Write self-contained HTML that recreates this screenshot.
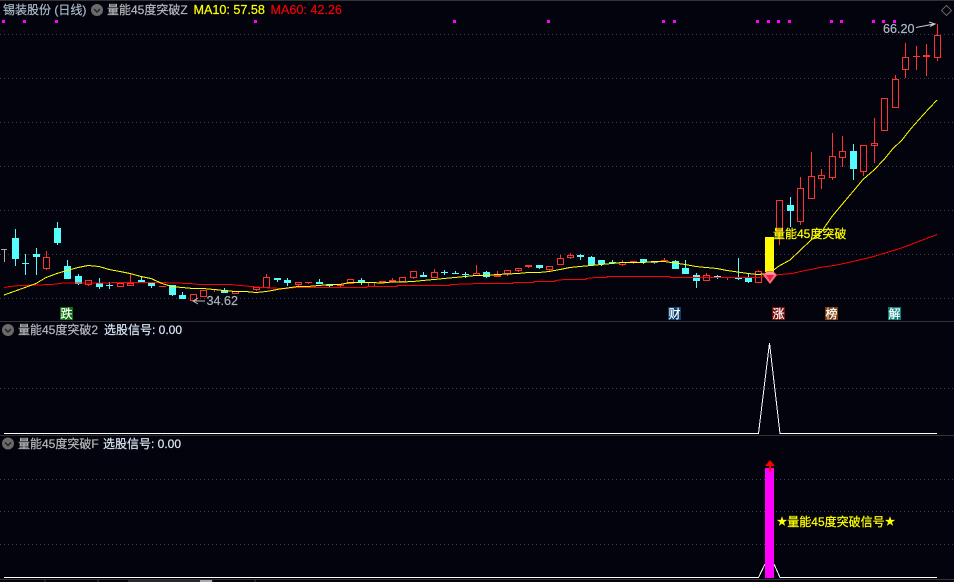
<!DOCTYPE html>
<html><head><meta charset="utf-8"><style>
html,body{margin:0;padding:0;background:#03030d}
svg{display:block}
text{font-family:"Liberation Sans","Noto Sans CJK SC",sans-serif;font-size:12px;stroke-width:.22px}
.h{font-size:12.6px}
.y{fill:#ffff00;stroke:#ffff00}.g{fill:#b4b8bc;stroke:#b4b8bc}.b{fill:#a9b9c6;stroke:#a9b9c6}.w{fill:#d8e4f0;stroke:#d8e4f0}.t{fill:#fff;stroke:#fff}
</style></head><body>
<svg width="954" height="582" viewBox="0 0 954 582" xmlns="http://www.w3.org/2000/svg">
<rect width="954" height="582" fill="#03030d"/>
<rect width="954" height="1" fill="#333"/>
<g stroke="#404040" stroke-width="1" stroke-dasharray="1 3" shape-rendering="crispEdges">
<path d="M0 34.5H954M0 78.5H954M0 122.5H954M0 166.5H954M0 210.5H954M0 254.5H954M0 298.5H954M0 388.5H954M0 479.5H954M0 511.5H954M0 544.5H954"/>
</g>
<g stroke="#333" shape-rendering="crispEdges"><path d="M0 321.5H954M0 435.5H954M0 579.5H954"/></g>
<rect x="128" y="580" width="85" height="2" fill="#2a2a2a"/><rect x="200" y="580" width="12" height="2" fill="#aaa"/>
<path d="M45 580v2M98 580v2M255 580v2" stroke="#444"/>
<g fill="#ff00ff">
<rect x="2" y="20" width="3" height="3"/><rect x="23" y="20" width="3" height="3"/><rect x="55" y="20" width="3" height="3"/><rect x="254" y="20" width="3" height="3"/><rect x="453" y="20" width="3" height="3"/><rect x="547" y="20" width="3" height="3"/><rect x="662" y="20" width="3" height="3"/><rect x="673" y="20" width="3" height="3"/><rect x="756" y="20" width="3" height="3"/><rect x="767" y="20" width="3" height="3"/><rect x="777" y="20" width="3" height="3"/><rect x="788" y="20" width="3" height="3"/><rect x="830" y="20" width="3" height="3"/><rect x="840" y="20" width="3" height="3"/><rect x="872" y="20" width="3" height="3"/><rect x="882" y="20" width="3" height="3"/><rect x="893" y="20" width="3" height="3"/>
</g>
<path d="M1 249.5H7M4.5 249V262" stroke="#aaa" fill="none" shape-rendering="crispEdges"/>
<!-- cyan wicks -->
<path shape-rendering="crispEdges" stroke="#54fcfc" fill="none" d="M15.5 229V266M25.5 254V275M36.5 248V275M57.5 222V245M67.5 260V279M78.5 274V285M99.5 278V289M109.5 282V289M141.5 277V283M151.5 283V288M172.5 285V296M182.5 292V299M224.5 288V293M277.5 278V282M287.5 278V286M319.5 279V284M329.5 284V287M361.5 278V285M423.5 272V277M444.5 270V275M455.5 271V274M465.5 272V278M486.5 271V278M539.5 265V269M580.5 254V260M591.5 256V265M601.5 260V266M612.5 260V264M643.5 259V264M675.5 260V269M685.5 260V274M696.5 273V288M717.5 275V279M738.5 258V280M748.5 274V283M790.5 197V227M853.5 144V180"/>
<!-- cyan bodies -->
<g fill="#54fcfc" shape-rendering="crispEdges">
<rect x="12" y="238" width="7" height="21"/><rect x="22" y="263" width="7" height="1"/><rect x="33" y="254" width="7" height="3"/><rect x="54" y="228" width="7" height="15"/><rect x="64" y="266" width="7" height="13"/><rect x="75" y="276" width="7" height="8"/><rect x="96" y="283" width="7" height="4"/><rect x="106" y="285" width="7" height="1"/><rect x="138" y="280" width="7" height="3"/><rect x="148" y="283" width="7" height="3"/><rect x="169" y="285" width="7" height="10"/><rect x="179" y="295" width="7" height="4"/><rect x="221" y="290" width="7" height="3"/>
<rect x="274" y="278" width="7" height="2"/><rect x="284" y="280" width="7" height="3"/><rect x="316" y="282" width="7" height="2"/><rect x="326" y="285" width="7" height="1"/><rect x="358" y="280" width="7" height="3"/><rect x="420" y="275" width="7" height="2"/><rect x="441" y="272" width="7" height="1"/><rect x="452" y="273" width="7" height="1"/><rect x="462" y="274" width="7" height="1"/><rect x="483" y="272" width="7" height="5"/><rect x="536" y="265" width="7" height="3"/><rect x="577" y="255" width="7" height="2"/><rect x="588" y="257" width="7" height="8"/><rect x="598" y="260" width="7" height="4"/><rect x="609" y="262" width="7" height="1"/><rect x="640" y="259" width="7" height="3"/><rect x="672" y="261" width="7" height="8"/><rect x="682" y="268" width="7" height="6"/><rect x="693" y="275" width="7" height="6"/><rect x="714" y="276" width="7" height="1"/><rect x="735" y="278" width="7" height="1"/><rect x="745" y="278" width="7" height="4"/><rect x="787" y="205" width="7" height="6"/><rect x="850" y="151" width="7" height="18"/>
</g>
<path d="M654.5 262V264M651 262.5H658" stroke="#999" fill="none" shape-rendering="crispEdges"/>
<!-- red hollow with wicks -->
<path shape-rendering="crispEdges" stroke="#ff3232" fill="none" d="M43.5 257.5h6v11h-6zM46.5 251V257M46.5 269V270
M85.5 280.5h6v4h-6zM88.5 285V286
M117.5 283.5h6v3h-6z
M127.5 283.5h6v2h-6zM130.5 274V283
M190.5 294.5h6v6h-6z
M200.5 290.5h6v6h-6z
M232.5 291.5h6v2h-6z
M253.5 287.5h6v2h-6zM256.5 290V291
M263.5 277.5h6v10h-6zM266.5 274V277
M295.5 282.5h6v2h-6zM298.5 285V286
M347.5 279.5h6v4h-6z
M368.5 282.5h6v4h-6z
M399.5 277.5h6v4h-6z
M410.5 271.5h6v6h-6zM413.5 278V279
M431.5 272.5h6v5h-6zM434.5 269V272
M473.5 273.5h6v2h-6zM476.5 265V273
M504.5 270.5h6v3h-6zM507.5 274V276
M515.5 268.5h6v2h-6zM518.5 271V272
M546.5 266.5h6v3h-6zM549.5 270V271
M557.5 258.5h6v6h-6zM560.5 255V258
M567.5 255.5h6v2h-6zM570.5 253V255M570.5 258V259
M619.5 262.5h6v2h-6zM622.5 260V262M622.5 265V266
M703.5 275.5h6v5h-6zM706.5 273V275
M755.5 271.5h6v11h-6zM758.5 270V271
M776.5 200.5h6v31h-6zM779.5 232V245
M797.5 188.5h6v33h-6zM800.5 177V188M800.5 222V225
M808.5 176.5h6v22h-6zM811.5 152V176
M818.5 175.5h6v3h-6zM821.5 169V175M821.5 179V189
M829.5 156.5h6v21h-6zM832.5 133V156M832.5 178V180
M839.5 151.5h6v6h-6zM842.5 136V151M842.5 158V167
M860.5 145.5h6v26h-6zM863.5 172V176
M871.5 143.5h6v2h-6zM874.5 118V143M874.5 146V163
M881.5 98.5h6v32h-6z
M892.5 79.5h6v28h-6zM895.5 75V79
M902.5 57.5h6v12h-6zM905.5 43V57M905.5 70V78
M916.5 46V70M913 56.5h7
M926.5 44V76
M934.5 35.5h6v22h-6zM937.5 24V35M937.5 58V61"/>
<!-- red solid small -->
<g fill="#ff3232" shape-rendering="crispEdges">
<rect x="159" y="286" width="7" height="1"/><rect x="211" y="289" width="7" height="1"/><rect x="214" y="290" width="1" height="2"/><rect x="242" y="291" width="7" height="1"/><rect x="305" y="282" width="7" height="1"/><rect x="308" y="283" width="1" height="1"/><rect x="337" y="285" width="7" height="1"/><rect x="340" y="286" width="1" height="1"/><rect x="379" y="281" width="7" height="2"/><rect x="389" y="280" width="7" height="2"/><rect x="392" y="278" width="1" height="2"/><rect x="494" y="275" width="7" height="2"/><rect x="497" y="271" width="1" height="4"/><rect x="525" y="265" width="7" height="2"/><rect x="528" y="267" width="1" height="1"/><rect x="630" y="261" width="7" height="1"/><rect x="633" y="262" width="1" height="2"/><rect x="661" y="260" width="7" height="1"/><rect x="664" y="258" width="1" height="2"/><rect x="727" y="277" width="1" height="3"/><rect x="923" y="55" width="7" height="2"/>
</g>
<!-- MA60 -->
<polyline fill="none" stroke="#ff0000" stroke-width="1" shape-rendering="crispEdges" points="4,287.5 10,286.5 20,285.5 52,284.5 63,283 160,282.5 190,283.5 200,284.5 230,284.5 240,285.5 251,286.5 262,287.5 282,288.5 293,288 293,287.5 367,287.5 367,286.5 397,286.5 397,285.5 450,285.5 450,284.5 481,283.5 513,283.5 513,282.5 534,282.5 534,281.5 555,281.5 555,280.5 565,279.5 586,279.5 586,278.5 596,277.5 607,277.5 607,276.5 670,276.5 670,277.5 758,277.5 780,274.5 792,273.5 803,271 820,267.5 837,265 853,261.5 870,257.5 887,252.5 903,247.5 920,241 937,234.5"/>
<!-- MA10 -->
<polyline fill="none" stroke="#ffff00" stroke-width="1" shape-rendering="crispEdges" points="4,295 25,287.5 36,283.5 46,277.5 57,273.5 67,270.5 78,267.5 88,265.5 99,266.5 109,269.5 120,271.5 130,273.5 141,276.5 151,278.5 162,283.5 172,286.5 182,287.5 193,288.5 203,288.5 214,289.5 224,290.5 235,291.5 245,291.5 256,292.5 266,291.5 272,290.5 277,289.5 287,288 298,286.5 308,286.5 319,285.5 329,284.5 340,284.5 350,282.5 361,282.5 371,282.5 382,283 392,282 402,282 413,281.5 423,280.5 434,279.5 444,278.5 455,277.5 465,276.5 476,275.5 486,275.5 497,274.5 507,274 518,273.5 528,272.5 539,272.5 549,271.5 560,269.5 570,267.5 580,266.5 591,265.5 601,264.5 612,263.5 622,262.5 633,262.5 643,262.5 654,261.5 664,261.5 675,263 685,264.5 696,266.5 706,267.5 717,268.5 727,270.5 738,272 748,273.5 758,274.5 769,273.5 779,266 790,260 800,250.5 811,240 821,232.5 832,216.5 842,204.5 853,191.5 863,179.5 874,170 884,159.5 893,148.5 902,140 911,128.5 923,115 937,100"/>
<!-- breakout bar + gem -->
<rect x="765" y="237" width="9" height="35" fill="#ffff00"/>
<path d="M763 275L767 271H773L777 275L770 284Z" fill="#ff6878"/>
<path d="M766 275H774L770 281Z" fill="#e8203c"/><path d="M767 272H773L775 274.500H765Z" fill="#ff9ca8"/>
<text x="773" y="238" class="y">量能45度突破</text>
<!-- header -->
<text x="3" y="14" class="b">锡装股份 (日线)</text>
<circle cx="97" cy="10" r="6" fill="#6a6a6a"/><path d="M94 9l3 3 3-3" stroke="#222" stroke-width="1.4" fill="none"/>
<text x="107" y="14" class="g">量能45度突破Z</text>
<text x="193.5" y="14" class="h y">MA10: 57.58</text>
<text x="270.5" y="14" class="h" style="fill:#f00000;stroke:#f00000">MA60: 42.26</text>
<!-- high/low markers -->
<text x="883" y="33" class="h b">66.20</text>
<path d="M916 27.500L934 24M929 22L935 24L930 26.500" stroke="#ccc" fill="none"/>
<path d="M946.500 5.500L951.500 10.500L946.500 15.500L941.500 10.500Z" stroke="#666" fill="none"/>
<text x="206.500" y="305" class="h" style="fill:#a9b0b8;stroke:#a9b0b8">34.62</text>
<path d="M205 301H194M198 298L193 301L198 304" stroke="#bbb" fill="none"/>
<!-- tags -->
<rect x="60" y="307" width="13" height="13" fill="#0a6e0a"/><text x="60.500" y="318" class="t">跌</text>
<rect x="668" y="307" width="13" height="13" fill="#0c3c6c"/><text x="668.500" y="318" class="t">财</text>
<rect x="772" y="307" width="13" height="13" fill="#7a0a0a"/><text x="772.500" y="318" class="t">涨</text>
<rect x="825" y="307" width="13" height="13" fill="#7a3c0a"/><text x="825.500" y="318" class="t">榜</text>
<rect x="888" y="307" width="13" height="13" fill="#0a7a7a"/><text x="888.500" y="318" class="t">解</text>
<!-- panel 2 -->
<circle cx="8" cy="330" r="6" fill="#6a6a6a"/><path d="M5 329l3 3 3-3" stroke="#222" stroke-width="1.4" fill="none"/>
<text x="18" y="334" class="g">量能45度突破2</text>
<text x="104" y="334" class="w">选股信号: 0.00</text>
<polyline fill="none" stroke="#fff" stroke-width="1" shape-rendering="crispEdges" points="4,433.500 758.500,433.500 769.500,343 780,433.500 937,433.500"/>
<!-- panel 3 -->
<circle cx="8" cy="443.500" r="6" fill="#6a6a6a"/><path d="M5 442.500l3 3 3-3" stroke="#222" stroke-width="1.4" fill="none"/>
<text x="18" y="448" class="g">量能45度突破F</text>
<text x="103" y="448" class="w">选股信号: 0.00</text>
<path d="M4 577.500H758.500L765 564M774 564L780 577.500H937" fill="none" stroke="#fff" stroke-width="1" shape-rendering="crispEdges"/>
<rect x="765" y="468" width="9" height="110" fill="#ff00ff"/>
<path d="M770 460L775 466H771V472H769V466H765Z" fill="#ff0000"/>
<text x="777" y="525" class="y" style="font-size:10px">★</text>
<text x="787.300" y="526" class="y">量能45度突破信号</text>
<text x="885" y="525" class="y" style="font-size:10px">★</text>
</svg>
</body></html>
